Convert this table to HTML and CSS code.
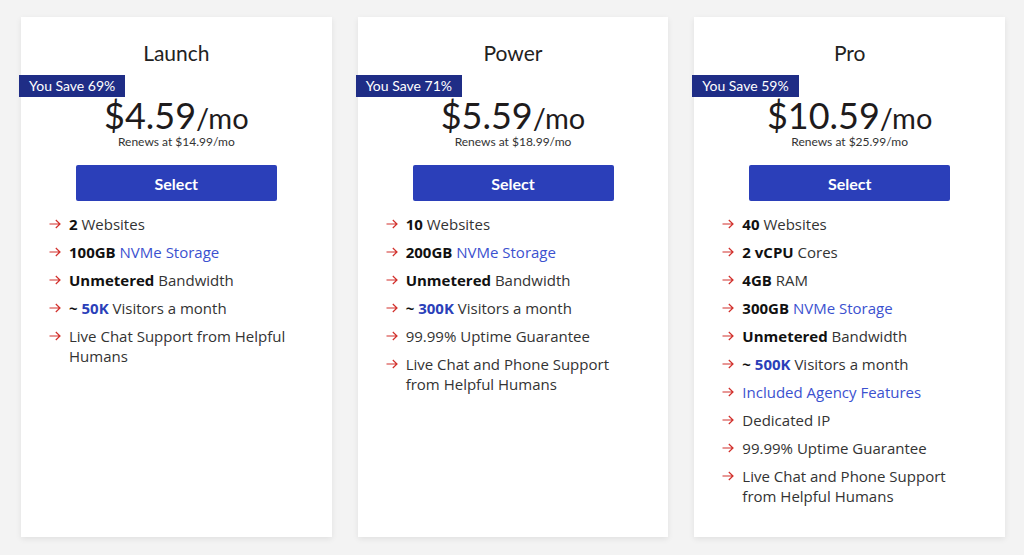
FILE: index.html
```html
<!DOCTYPE html>
<html lang="en">
<head>
<meta charset="utf-8">
<title>Plans</title>
<link rel="stylesheet" href="styles.css">
</head>
<body>
<div class="plans">
  <section class="card">
    <h2 class="title">Launch</h2>
    <div class="badge">You Save 69%</div>
    <div class="price">$4.59<span class="per">/mo</span></div>
    <div class="renew">Renews at $14.99/mo</div>
    <button class="select">Select</button>
    <ul class="features">
      <li><svg class="arr" viewBox="0 0 12 10"><path d="M0.5 5H11M6.8 1L11 5L6.8 9"/></svg><span><b>2</b> Websites</span></li>
      <li><svg class="arr" viewBox="0 0 12 10"><path d="M0.5 5H11M6.8 1L11 5L6.8 9"/></svg><span><b>100GB</b> <a class="link">NVMe Storage</a></span></li>
      <li><svg class="arr" viewBox="0 0 12 10"><path d="M0.5 5H11M6.8 1L11 5L6.8 9"/></svg><span><b>Unmetered</b> Bandwidth</span></li>
      <li><svg class="arr" viewBox="0 0 12 10"><path d="M0.5 5H11M6.8 1L11 5L6.8 9"/></svg><span><b>~ <em class="hl">50K</em></b> Visitors a month</span></li>
      <li><svg class="arr" viewBox="0 0 12 10"><path d="M0.5 5H11M6.8 1L11 5L6.8 9"/></svg><span>Live Chat Support from Helpful Humans</span></li>
    </ul>
  </section>
  <section class="card">
    <h2 class="title">Power</h2>
    <div class="badge">You Save 71%</div>
    <div class="price">$5.59<span class="per">/mo</span></div>
    <div class="renew">Renews at $18.99/mo</div>
    <button class="select">Select</button>
    <ul class="features">
      <li><svg class="arr" viewBox="0 0 12 10"><path d="M0.5 5H11M6.8 1L11 5L6.8 9"/></svg><span><b>10</b> Websites</span></li>
      <li><svg class="arr" viewBox="0 0 12 10"><path d="M0.5 5H11M6.8 1L11 5L6.8 9"/></svg><span><b>200GB</b> <a class="link">NVMe Storage</a></span></li>
      <li><svg class="arr" viewBox="0 0 12 10"><path d="M0.5 5H11M6.8 1L11 5L6.8 9"/></svg><span><b>Unmetered</b> Bandwidth</span></li>
      <li><svg class="arr" viewBox="0 0 12 10"><path d="M0.5 5H11M6.8 1L11 5L6.8 9"/></svg><span><b>~ <em class="hl">300K</em></b> Visitors a month</span></li>
      <li><svg class="arr" viewBox="0 0 12 10"><path d="M0.5 5H11M6.8 1L11 5L6.8 9"/></svg><span>99.99% Uptime Guarantee</span></li>
      <li><svg class="arr" viewBox="0 0 12 10"><path d="M0.5 5H11M6.8 1L11 5L6.8 9"/></svg><span>Live Chat and Phone Support from Helpful Humans</span></li>
    </ul>
  </section>
  <section class="card">
    <h2 class="title">Pro</h2>
    <div class="badge">You Save 59%</div>
    <div class="price">$10.59<span class="per">/mo</span></div>
    <div class="renew">Renews at $25.99/mo</div>
    <button class="select">Select</button>
    <ul class="features">
      <li><svg class="arr" viewBox="0 0 12 10"><path d="M0.5 5H11M6.8 1L11 5L6.8 9"/></svg><span><b>40</b> Websites</span></li>
      <li><svg class="arr" viewBox="0 0 12 10"><path d="M0.5 5H11M6.8 1L11 5L6.8 9"/></svg><span><b>2 vCPU</b> Cores</span></li>
      <li><svg class="arr" viewBox="0 0 12 10"><path d="M0.5 5H11M6.8 1L11 5L6.8 9"/></svg><span><b>4GB</b> RAM</span></li>
      <li><svg class="arr" viewBox="0 0 12 10"><path d="M0.5 5H11M6.8 1L11 5L6.8 9"/></svg><span><b>300GB</b> <a class="link">NVMe Storage</a></span></li>
      <li><svg class="arr" viewBox="0 0 12 10"><path d="M0.5 5H11M6.8 1L11 5L6.8 9"/></svg><span><b>Unmetered</b> Bandwidth</span></li>
      <li><svg class="arr" viewBox="0 0 12 10"><path d="M0.5 5H11M6.8 1L11 5L6.8 9"/></svg><span><b>~ <em class="hl">500K</em></b> Visitors a month</span></li>
      <li><svg class="arr" viewBox="0 0 12 10"><path d="M0.5 5H11M6.8 1L11 5L6.8 9"/></svg><span><a class="link">Included Agency Features</a></span></li>
      <li><svg class="arr" viewBox="0 0 12 10"><path d="M0.5 5H11M6.8 1L11 5L6.8 9"/></svg><span>Dedicated IP</span></li>
      <li><svg class="arr" viewBox="0 0 12 10"><path d="M0.5 5H11M6.8 1L11 5L6.8 9"/></svg><span>99.99% Uptime Guarantee</span></li>
      <li><svg class="arr" viewBox="0 0 12 10"><path d="M0.5 5H11M6.8 1L11 5L6.8 9"/></svg><span>Live Chat and Phone Support from Helpful Humans</span></li>
    </ul>
  </section>
</div>
</body>
</html>
```
FILE: styles.css
```css
* { box-sizing: border-box; }
html, body { margin: 0; padding: 0; }
body {
  background: #f3f3f3;
  font-family: "Lato", "Noto Sans", sans-serif;
  color: #222;
  width: 1024px;
  height: 555px;
  overflow: hidden;
}
.plans {
  display: flex;
  gap: 26px;
  padding: 17px 19px 0 21px;
}
.card {
  width: 311px;
  height: 520px;
  background: #fff;
  box-shadow: 0 2px 6px rgba(0,0,0,0.08);
  display: flex;
  flex-direction: column;
  align-items: center;
}
.title {
  margin: 0;
  padding-top: 23px;
  font-weight: 400;
  font-size: 21px;
  line-height: 26px;
  color: #222;
}
.badge {
  align-self: flex-start;
  margin: 9px 0 0 -2px;
  height: 22px;
  line-height: 22px;
  padding: 0 10px;
  background: #1f2d86;
  color: #fff;
  font-size: 14px;
}
.price {
  margin-top: -1px;
  font-size: 36px;
  line-height: 38px;
  color: #1e1b1c;
}
.per { font-size: 29px; }
.renew {
  margin-top: -2px;
  font-size: 12px;
  line-height: 14px;
  color: #333;
}
.select {
  margin-top: 16px;
  width: 201px;
  height: 36px;
  border: 0;
  border-radius: 2px;
  background: #2b3fb9;
  color: #fff;
  font-family: inherit;
  font-size: 16px;
  font-weight: 700;
}
.features {
  list-style: none;
  margin: 13px 0 0 0;
  padding: 0 33px 0 28px;
  align-self: stretch;
  font-family: "Open Sans", "Noto Sans", sans-serif;
  font-size: 15px;
  line-height: 20px;
  color: #333;
}
.features li {
  display: flex;
  gap: 8px;
  margin-bottom: 8px;
}
.arr {
  flex: none;
  width: 12px;
  height: 10px;
  margin-top: 5px;
  fill: none;
  stroke: #d2302c;
  stroke-width: 1.2;
}
.features b { font-weight: 700; color: #111; }
.link { color: #3b51cf; text-decoration: none; }
.hl { font-style: normal; color: #2b3fb9; }
```
